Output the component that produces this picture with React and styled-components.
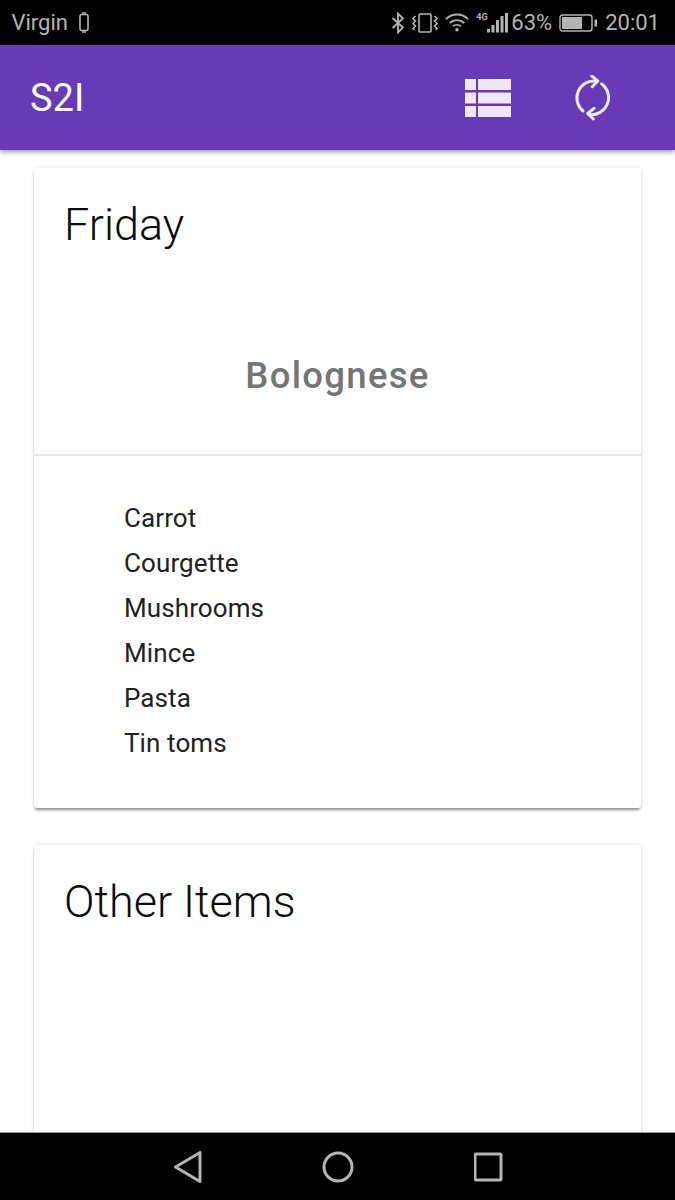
import React from 'react';
import styled, { createGlobalStyle } from 'styled-components';

const Global = createGlobalStyle`
  html, body { margin: 0; padding: 0; background: #fff; }
  body { font-family: Roboto, "Liberation Sans", sans-serif; }
`;
const Screen = styled.div`
  width: 675px; height: 1200px; display: flex; flex-direction: column; overflow: hidden; background: #fff;
`;
const StatusBar = styled.div`
  height: 45px; flex: none; background: #000; color: #b4b4b4; display: flex; align-items: center;
  justify-content: space-between; padding: 0 15px 0 11.500px; font-size: 22px; box-sizing: border-box;
`;
const StatusGroup = styled.div`
  display: flex; align-items: center; gap: ${p => p.$gap}px;
`;
const StatusText = styled.span`
  margin-left: ${p => p.$shift ?? 0}px;
`;
const AppBar = styled.header`
  height: 105px; flex: none; background: #673ab7; color: #fff; display: flex; align-items: center;
  padding: 0 64px 0 30px; box-sizing: border-box; box-shadow: 0 2px 5px rgba(0,0,0,.4); position: relative; z-index: 1;
`;
const AppTitle = styled.div`
  font-size: 38px; flex: 1; line-height: 1;
`;
const ActionGroup = styled.div`
  display: flex; align-items: center; gap: 62px;
`;
const Content = styled.main`
  flex: 1; min-height: 0; overflow: hidden; display: flex; flex-direction: column; gap: 37px; padding: 18px 34px 0;
`;
const Card = styled.section`
  background: #fff; border-radius: 3px; flex: none; height: ${p => p.$height}px; box-sizing: border-box;
  box-shadow: 0 3px 3px -1px rgba(0,0,0,.42), 0 0 4px rgba(0,0,0,.1);
`;
const CardTitle = styled.h2`
  margin: 0; padding: 31px 30px 0; font-size: 45px; line-height: 52px; font-weight: 300; color: #0c0c0c;
`;
const Dish = styled.div`
  height: 205px; box-sizing: border-box; padding-top: 104px; text-align: center; font-size: 36.500px; line-height: 42px;
  font-weight: 500; letter-spacing: 1.300px; color: #757575; border-bottom: 2px solid #e6e6e6;
`;
const Ingredients = styled.ul`
  list-style: none; margin: 0; padding: 40px 0 0 90px;
`;
const Ingredient = styled.li`
  font-size: 26px; letter-spacing: .1px; line-height: 45px; color: #212121;
`;
const NavBar = styled.nav`
  height: 68px; flex: none; background: #000; border-top: 1px solid #999; box-sizing: border-box;
  display: flex; align-items: center; justify-content: center; gap: 120px; padding-left: 2px; position: relative; z-index: 1;
`;
const Svg = styled.svg`
  display: block; flex: none;
`;

const ingredients = ['Carrot', 'Courgette', 'Mushrooms', 'Mince', 'Pasta', 'Tin toms'];

const ListIcon = () => (
  <Svg width="46" height="38" viewBox="0 0 46 38" fill="#ede7f6">
    <rect x="0" y="0" width="11" height="11" /><rect x="13" y="0" width="33" height="11" />
    <rect x="0" y="13.500" width="11" height="11" /><rect x="13" y="13.500" width="33" height="11" />
    <rect x="0" y="27" width="11" height="11" /><rect x="13" y="27" width="33" height="11" />
  </Svg>
);
const SyncIcon = () => (
  <Svg width="38" height="46" viewBox="0 0 38 46" fill="none" stroke="#ede7f6" strokeWidth="3" strokeLinecap="round" strokeLinejoin="round">
    <path d="M10 36 A17 17 0 0 1 22 6" />
    <path d="M28.700 9 A17 17 0 0 1 16.300 39.500" />
    <path d="M18.600 .700 L24.700 6 L19.300 11.700" />
    <path d="M21 33.300 L14.700 38.500 L20.300 44" />
  </Svg>
);
const Phone = () => (
  <Svg width="10" height="21" viewBox="0 0 10 21" fill="none" stroke="#b4b4b4" strokeWidth="1.600">
    <rect x="1" y="2.500" width="8" height="16" rx="1.500" /><path d="M3 1h4M3 20h4" />
  </Svg>
);
const Bluetooth = () => (
  <Svg width="14" height="22" viewBox="0 0 14 22" fill="none" stroke="#b4b4b4" strokeWidth="1.800">
    <path d="M1.500 6 L12 15.500 L7 20.500 V1.500 L12 6.500 L1.500 16" />
  </Svg>
);
const Vibrate = () => (
  <Svg width="26" height="20" viewBox="0 0 26 20" fill="none" stroke="#b4b4b4" strokeWidth="1.600">
    <rect x="7" y="1" width="12" height="18" rx="1" />
    <path d="M3.500 3 L1 5.500 L3.500 8 L1 10.500 L3.500 13 L1 15.500 L2.500 17" />
    <path d="M22.500 3 L25 5.500 L22.500 8 L25 10.500 L22.500 13 L25 15.500 L23.500 17" />
  </Svg>
);
const Wifi = () => (
  <Svg width="24" height="19" viewBox="0 0 25 19" fill="none" stroke="#b4b4b4" strokeWidth="2">
    <path d="M1 6 A16 16 0 0 1 24 6" /><path d="M5 10 A11 11 0 0 1 20 10" /><path d="M8.500 13.500 A6 6 0 0 1 16.500 13.500" />
    <circle cx="12.500" cy="17" r="1.800" fill="#b4b4b4" stroke="none" />
  </Svg>
);
const SignalWrap = styled.div`
  position: relative; width: 32px; height: 20px; flex: none;
`;
const NetLabel = styled.span`
  position: absolute; left: 0; top: 0; font-size: 9px; line-height: 9px; font-weight: 700; color: #b4b4b4;
`;
const Signal = () => (
  <SignalWrap>
    <NetLabel>4G</NetLabel>
    <Svg width="32" height="20" viewBox="0 0 32 20" fill="#b4b4b4">
      <rect x="11" y="16" width="3" height="3.500" /><rect x="15.500" y="12" width="3" height="7.500" />
      <rect x="20" y="7" width="3" height="12.500" /><rect x="24.500" y="3" width="3" height="16.500" /><rect x="29" y="0" width="3" height="19.500" />
    </Svg>
  </SignalWrap>
);
const Battery = () => (
  <Svg width="38" height="18" viewBox="0 0 38 18" fill="none">
    <rect x="1" y="1" width="32" height="16" rx="2.500" stroke="#b4b4b4" strokeWidth="1.400" />
    <rect x="3" y="3" width="20" height="12" fill="#b4b4b4" />
    <rect x="35.500" y="5.500" width="2.500" height="7" fill="#b4b4b4" />
  </Svg>
);

export default function App() {
  return (
    <Screen>
      <Global />
      <StatusBar>
        <StatusGroup $gap={11}><span>Virgin</span><Phone /></StatusGroup>
        <StatusGroup $gap={7}>
          <Bluetooth /><Vibrate /><Wifi /><Signal /><StatusText $shift={-4}>63%</StatusText><Battery /><StatusText $shift={1}>20:01</StatusText>
        </StatusGroup>
      </StatusBar>
      <AppBar>
        <AppTitle>S2I</AppTitle>
        <ActionGroup><ListIcon /><SyncIcon /></ActionGroup>
      </AppBar>
      <Content>
        <Card $height={640}>
          <CardTitle>Friday</CardTitle>
          <Dish>Bolognese</Dish>
          <Ingredients>
            {ingredients.map(i => <Ingredient key={i}>{i}</Ingredient>)}
          </Ingredients>
        </Card>
        <Card $height={400}>
          <CardTitle>Other Items</CardTitle>
        </Card>
      </Content>
      <NavBar>
        <Svg width="28" height="32" viewBox="0 0 28 32" fill="none" stroke="#b4b4b4" strokeWidth="3" strokeLinejoin="round">
          <path d="M26 1.500 V30.500 L1.500 16 Z" />
        </Svg>
        <Svg width="32" height="32" viewBox="0 0 32 32" fill="none" stroke="#b4b4b4" strokeWidth="3">
          <circle cx="16" cy="16" r="14" />
        </Svg>
        <Svg width="30" height="30" viewBox="0 0 30 30" fill="none" stroke="#b4b4b4" strokeWidth="3" strokeLinejoin="round">
          <rect x="1" y="2" width="26" height="26" rx="1" />
        </Svg>
      </NavBar>
    </Screen>
  );
}
